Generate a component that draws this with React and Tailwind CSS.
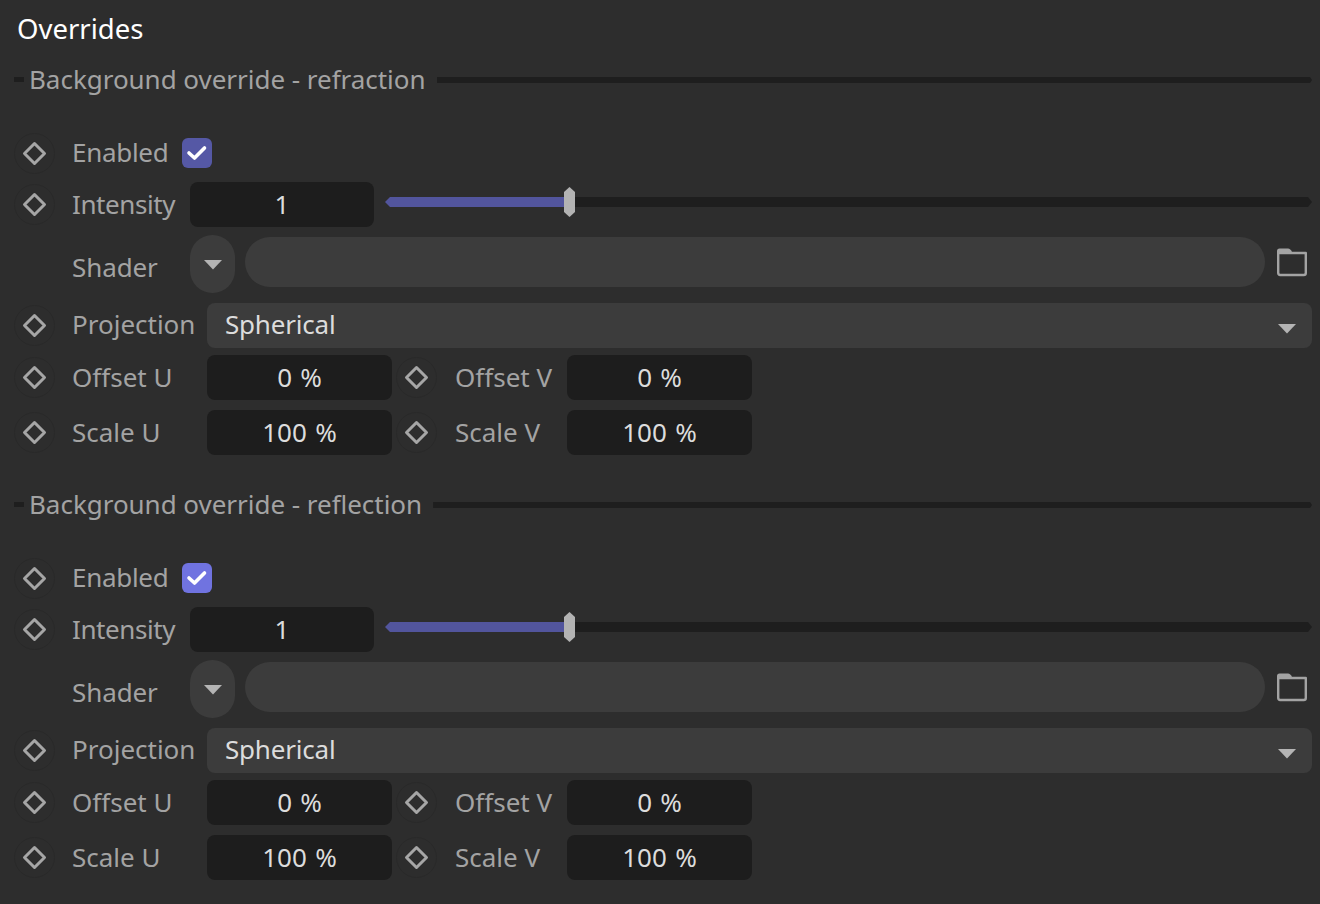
function Diamond() {
  return (
    <div className="w-[41px] h-[41px] shrink-0 rounded-full border border-[#292929] flex items-center justify-center">
      <svg width="27" height="27" viewBox="0 0 27 27" fill="none">
        <path d="M13.500 3.500 L23.500 13.500 L13.500 23.500 L3.500 13.500 Z" stroke="#a6a6a6" strokeWidth="3" strokeLinejoin="round" />
      </svg>
    </div>
  );
}

function Triangle() {
  return (
    <svg width="20" height="11" viewBox="0 0 20 11">
      <path d="M1 1 H19 L10 10.500 Z" fill="#b4b4b4" />
    </svg>
  );
}

function Label({ children, className = "" }) {
  return <span className={`text-[#a3a3a3] whitespace-nowrap ${className}`}>{children}</span>;
}

function NumberBox({ children, className = "" }) {
  return (
    <div className={`h-[45px] pb-[2px] rounded-[8px] bg-[#1d1d1d] flex items-center justify-center text-[#dcdcdc] [word-spacing:1.500px] ${className}`}>
      {children}
    </div>
  );
}

function Pair({ u, v, labelU, labelV, className = "" }) {
  return (
    <div className={`flex items-center h-[45px] ${className}`}>
      <Diamond />
      <Label className="ml-[17px] w-[135px] pb-[2px]">{labelU}</Label>
      <NumberBox className="w-[185px]">{u}</NumberBox>
      <div className="ml-[4px]"><Diamond /></div>
      <Label className="ml-[18px] w-[112px] pb-[2px]">{labelV}</Label>
      <NumberBox className="w-[185px]">{v}</NumberBox>
    </div>
  );
}

function Section({ title, check }) {
  return (
    <section className="pl-[14px] pr-[8px]">
      <div className="flex items-center h-[30px]">
        <div className="w-[10px] h-[5px] mb-[1px] bg-[#1e1e1e]" />
        <span className="ml-[5px] pb-[2px] text-[#a3a3a3] whitespace-nowrap tracking-[-0.03px]">{title}</span>
        <div className="ml-[11px] flex-1 h-[6px] bg-[#1e1e1e] [clip-path:polygon(0_0,calc(100%-2px)_0,100%_50%,calc(100%-2px)_100%,0_100%)]" />
      </div>

      <div className="flex items-center h-[40px] mt-[38px]">
        <Diamond />
        <Label className="ml-[17px] w-[110px] pb-[2px] tracking-[-0.3px]">Enabled</Label>
        <div className={`w-[30px] h-[30px] rounded-[6px] flex items-center justify-center ${check}`}>
          <svg width="22" height="22" viewBox="0 0 22 22" fill="none">
            <path d="M3 11 L8.500 16 L18.500 6" stroke="#ffffff" strokeWidth="3.600" strokeLinecap="round" strokeLinejoin="round" />
          </svg>
        </div>
      </div>

      <div className="flex items-center h-[45px] mt-[9px]">
        <Diamond />
        <Label className="ml-[17px] w-[118px] pb-[2px] tracking-[-0.4px]">Intensity</Label>
        <NumberBox className="w-[184px]">1</NumberBox>
        <div className="ml-[11px] flex-1 h-[30px] mb-[5px] flex items-center">
          <div className="w-[179px] h-[10px] bg-[#52559d] [clip-path:polygon(0_50%,5px_0,100%_0,100%_100%,5px_100%)]" />
          <div className="w-[11px] h-[30px] bg-[#b3b3b3] [clip-path:polygon(50%_0,100%_5px,100%_calc(100%-5px),50%_100%,0_calc(100%-5px),0_5px)]" />
          <div className="flex-1 h-[10px] bg-[#1e1e1e] [clip-path:polygon(0_0,calc(100%-4px)_0,100%_50%,calc(100%-4px)_100%,0_100%)]" />
        </div>
      </div>

      <div className="flex items-center h-[58px] mt-[8px]">
        <div className="w-[41px]" />
        <Label className="ml-[17px] w-[118px] pt-[6px] tracking-[-0.1px]">Shader</Label>
        <div className="w-[45px] h-[58px] rounded-full bg-[#3c3c3c] flex items-center justify-center">
          <Triangle />
        </div>
        <div className="ml-[10px] w-[1020px] h-[50px] mb-[4px] rounded-full bg-[#3c3c3c]" />
        <svg className="ml-[11px] mb-[4px]" width="32" height="30" viewBox="0 0 32 30" fill="none">
          <path d="M2.200 26 V6 H29.800 V26 Q29.800 28 27.800 28 H4.200 Q2.200 28 2.200 26 Z" stroke="#a3a3a3" strokeWidth="2.400" strokeLinejoin="round" />
          <path d="M1 7 V4 Q1 1.500 3.500 1.500 H12 Q14.500 1.500 16 5 L16.500 7 Z" fill="#a3a3a3" />
        </svg>
      </div>

      <div className="flex items-center h-[45px] mt-[10px]">
        <Diamond />
        <Label className="ml-[17px] w-[135px] pb-[4px]">Projection</Label>
        <div className="flex-1 h-[45px] rounded-[8px] bg-[#3c3c3c] flex items-center justify-between pl-[18px] pr-[15px]">
          <span className="text-[#dcdcdc] pb-[4px] tracking-[-0.2px]">Spherical</span>
          <div className="mt-[5px]"><Triangle /></div>
        </div>
      </div>

      <Pair labelU="Offset U" labelV="Offset V" u="0 %" v="0 %" className="mt-[7px]" />
      <Pair labelU="Scale U" labelV="Scale V" u="100 %" v="100 %" className="mt-[10px]" />
    </section>
  );
}

export default function App() {
  return (
    <div className="w-[1320px] h-[904px] overflow-hidden bg-[#2d2d2d] font-['Noto_Sans',sans-serif] text-[26px] leading-none">
      <div className="h-[40px] mt-[10px] pl-[17px] pb-[2px] flex items-center text-white text-[27.500px]">Overrides</div>
      <div className="pt-[15px] flex flex-col gap-[35px]">
        <Section title="Background override - refraction" check="bg-[#5558a5]" />
        <Section title="Background override - reflection" check="bg-[#7073e0]" />
      </div>
    </div>
  );
}
